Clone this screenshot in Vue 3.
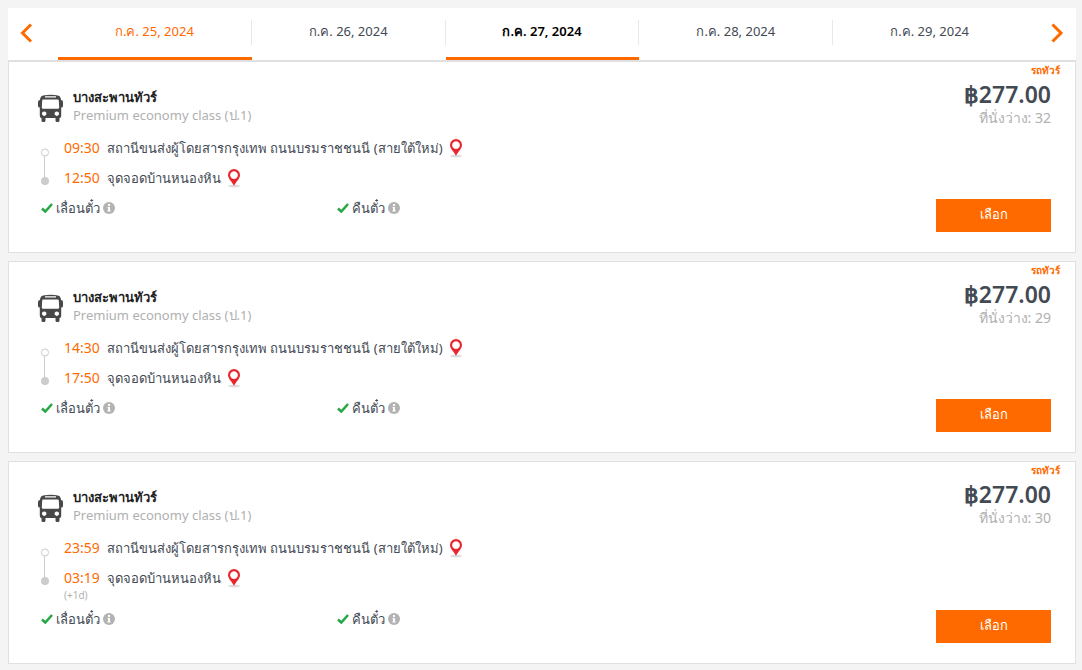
<script setup>
import { ref } from 'vue'

const dates = [
  { label: 'ก.ค. 25, 2024', kind: 'hover' },
  { label: 'ก.ค. 26, 2024', kind: '' },
  { label: 'ก.ค. 27, 2024', kind: 'current' },
  { label: 'ก.ค. 28, 2024', kind: '' },
  { label: 'ก.ค. 29, 2024', kind: '' },
]
const policies = ['เลื่อนตั๋ว', 'คืนตั๋ว']
const trips = ref([
  { depart: '09:30', arrive: '12:50', seats: 32, nextDay: '' },
  { depart: '14:30', arrive: '17:50', seats: 29, nextDay: '' },
  { depart: '23:59', arrive: '03:19', seats: 30, nextDay: '(+1d)' },
])
const stops = (t) => [
  { time: t.depart, name: 'สถานีขนส่งผู้โดยสารกรุงเทพ ถนนบรมราชชนนี (สายใต้ใหม่)' },
  { time: t.arrive, name: 'จุดจอดบ้านหนองหิน' },
]
</script>

<template>
  <main class="page">
    <nav class="dates" aria-label="วันเดินทาง">
      <button class="arrow" type="button" aria-label="ก่อนหน้า">
        <svg width="14" height="20" viewBox="0 0 14 20"><path d="M11 1.500 2.500 10l8.500 8.500" fill="none" stroke="#ff6a00" stroke-width="3" /></svg>
      </button>
      <button v-for="d in dates" :key="d.label" type="button" class="date" :class="d.kind">
        <span>{{ d.label }}</span>
      </button>
      <button class="arrow" type="button" aria-label="ถัดไป">
        <svg width="14" height="20" viewBox="0 0 14 20"><path d="M2.500 1.500 11 10l-8.500 8.500" fill="none" stroke="#ff6a00" stroke-width="3" /></svg>
      </button>
    </nav>

    <article v-for="trip in trips" :key="trip.depart" class="card">
      <div class="info">
        <header class="operator">
          <svg class="bus" width="26" height="28" viewBox="0 0 26 28">
            <path fill="#484848" fill-rule="evenodd" d="M5 1.500Q13-.2 20 1.500q2.500.5 2.800 3l.2 1.500q2 0 2 2v4q0 1.500-1.800 1.500V22q0 2-1.700 2v2.500q0 1.500-1.500 1.500h-1q-1.500 0-1.500-1.500V24h-10v2.500Q7.500 28 6 28H5q-1.500 0-1.500-1.500V24q-1.700 0-1.700-2v-8.500Q0 13.500 0 12V8q0-2 2-2l.2-1.500q.3-2.500 2.800-3zM7 2.300v1.200h11V2.300zM5.200 5.500q-1 0-1 1.200l-.4 6.500q0 1.500 1.200 1.500h15q1.200 0 1.200-1.500l-.4-6.500q0-1.200-1-1.200zM6.200 17.500a2.200 2.200 0 1 0 .01 0zM18.800 17.500a2.200 2.200 0 1 0 .01 0z" />
          </svg>
          <div>
            <h2>บางสะพานทัวร์</h2>
            <p>Premium economy class (ป.1)</p>
          </div>
        </header>

        <div class="route">
          <svg class="line" width="10" height="38" viewBox="0 0 10 38">
            <path d="M4.500 8v22" stroke="#ccc" />
            <circle cx="5" cy="4.500" r="3.500" fill="#fff" stroke="#ccc" />
            <circle cx="5" cy="33" r="4" fill="#ccc" />
          </svg>
          <ul>
            <li v-for="s in stops(trip)" :key="s.time">
              <time>{{ s.time }}</time>
              <span>{{ s.name }}</span>
              <svg class="pin" width="14" height="19" viewBox="0 0 14 19">
                <ellipse cx="7" cy="17" rx="6" ry="1.500" fill="#ddd" />
                <path fill="#e8262d" fill-rule="evenodd" d="M7 0a6 6 0 0 1 6 6c0 4-4.500 7-6 11C5.500 13 1 10 1 6a6 6 0 0 1 6-6zM7 2.200a3.900 3.900 0 1 0 .01 0z" />
              </svg>
            </li>
          </ul>
        </div>
        <small v-if="trip.nextDay">{{ trip.nextDay }}</small>

        <div class="policies">
          <span v-for="p in policies" :key="p" class="policy">
            <svg width="12" height="10" viewBox="0 0 12 10"><path d="M1 5.500 4.300 8.500 11 1" fill="none" stroke="#28a745" stroke-width="2.600" /></svg>
            <span>{{ p }}</span>
            <svg width="12" height="12" viewBox="0 0 12 12">
              <circle cx="6" cy="6" r="6" fill="#b3b3b3" />
              <path fill="#fff" d="M5 2h2v2H5zM4.500 5H7v3.500h.7v1H4.300v-1H5V6h-.5z" />
            </svg>
          </span>
        </div>
      </div>

      <aside class="fare">
        <span class="type">รถทัวร์</span>
        <strong>฿277.00</strong>
        <span class="seats">ที่นั่งว่าง: {{ trip.seats }}</span>
        <button type="button" class="select">เลือก</button>
      </aside>
    </article>
  </main>
</template>

<style>
body {
  background: #f4f4f4;
}
</style>

<style scoped>
.page {
  padding: 8px 6px 6px 8px;
  font-family: "Noto Sans", "Open Sans", sans-serif;
  font-size: 13px;
  line-height: 18px;
  color: #434a54;
}
button {
  border: 0;
  padding: 0;
  background: none;
  font: inherit;
  color: inherit;
  cursor: pointer;
}
h2, p, ul {
  margin: 0;
  padding: 0;
}
.dates {
  display: flex;
  height: 52px;
  background: #fff;
  border-bottom: 2px solid #e0e0e2;
}
.arrow {
  flex: 0 0 50px;
  padding: 0 12px 2px;
  display: flex;
  align-items: center;
}
.arrow:last-child {
  flex-basis: 49px;
  justify-content: flex-end;
}
.date {
  flex: 1;
  border-bottom: 3px solid transparent;
  padding-bottom: 1px;
}
.date span {
  display: block;
  height: 25px;
  line-height: 22px;
  border-right: 1px solid #e8e8ea;
}
.date:nth-last-child(2) span {
  border-color: transparent;
}
.hover {
  color: #ff6a00;
  border-color: #ff6a00;
}
.current {
  color: #000;
  font-weight: 600;
  border-color: #ff6a00;
}
.card {
  display: flex;
  justify-content: space-between;
  background: #fff;
  border: 1px solid #e0e0e2;
  margin-bottom: 8px;
}
.dates + .card {
  border-top: 0;
}
.info {
  flex: 1;
  min-width: 0;
  padding: 26px 0 29px 29px;
}
.operator {
  display: flex;
  gap: 9px;
}
.bus {
  margin-top: 6px;
}
h2 {
  font-size: 13px;
  font-weight: 600;
  line-height: 18px;
  color: #222;
}
.operator p {
  color: #b0b0b0;
}
.route {
  display: flex;
  margin-top: 9px;
  padding-left: 2px;
}
.line {
  margin: 15px 14px 0 0;
}
ul {
  list-style: none;
}
li {
  display: flex;
  align-items: center;
  height: 30px;
}
time {
  width: 43px;
  font-size: 14px;
  color: #ff6a00;
}
.pin {
  margin-left: 6px;
}
small {
  display: block;
  height: 11px;
  margin-left: 26px;
  font-size: 10px;
  line-height: 5px;
  color: #b0b0b0;
}
.policies {
  display: flex;
  padding-left: 3px;
  height: 30px;
}
.policy {
  width: 296px;
  display: flex;
  align-items: center;
  gap: 3px;
}
.fare {
  display: flex;
  flex-direction: column;
  align-items: flex-end;
  padding: 0 24px 20px 0;
}
.type {
  margin-right: -9px;
  font-size: 10px;
  font-weight: 600;
  line-height: 16px;
  color: #ff6a00;
}
strong {
  font-size: 23px;
  line-height: 32px;
  font-weight: 600;
}
.seats {
  font-size: 14px;
  line-height: 16px;
  color: #b0b0b0;
}
.select {
  width: 115px;
  height: 33px;
  margin-top: auto;
  padding-bottom: 4px;
  background: #ff6a00;
  color: #fff;
}
</style>
